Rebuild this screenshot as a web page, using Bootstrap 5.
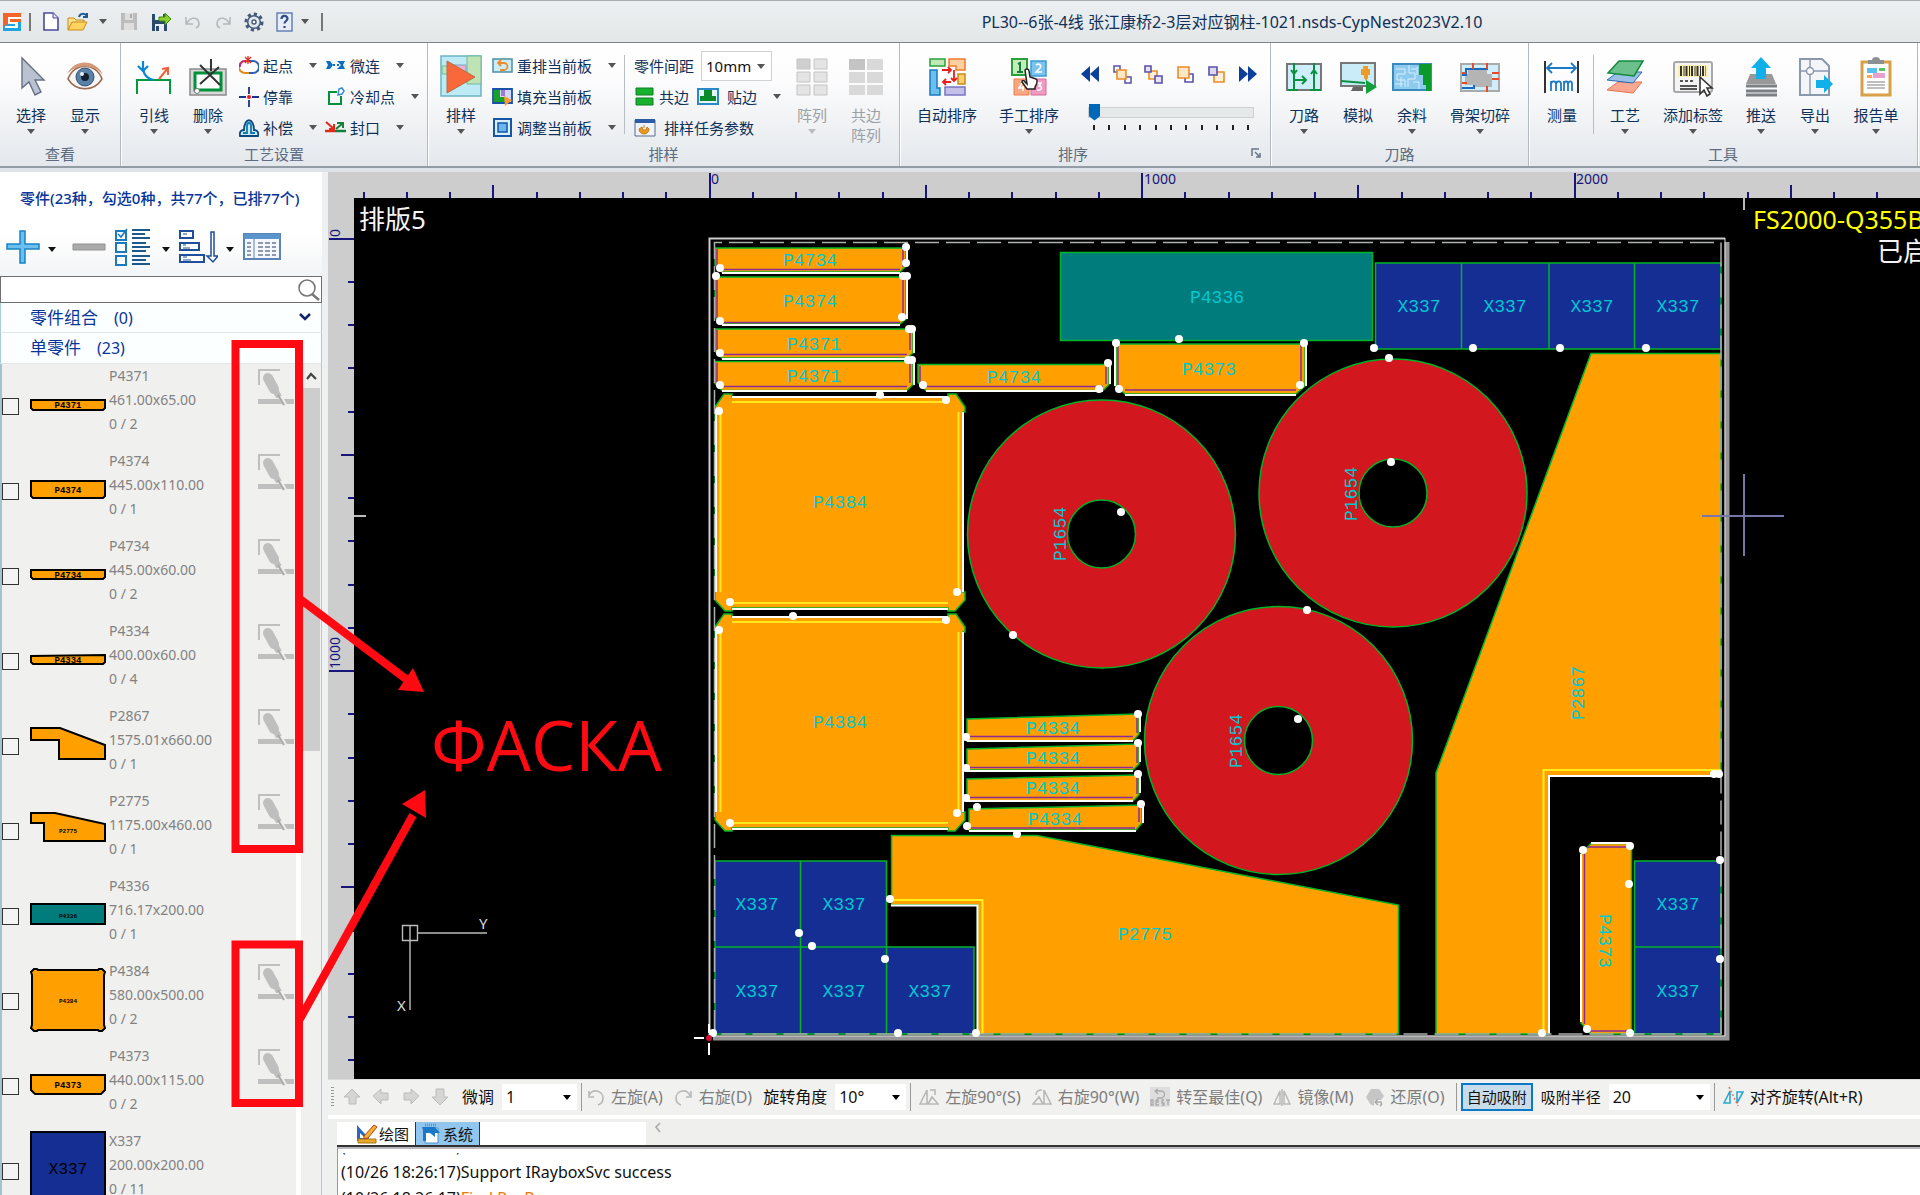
<!DOCTYPE html>
<html lang="zh-CN">
<head>
<meta charset="utf-8">
<meta name="viewport" content="width=device-width, initial-scale=1">
<title>PL30--6张-4线 张江康桥2-3层对应钢柱-1021.nsds-CypNest2023V2.10</title>
<link href="https://cdn.jsdelivr.net/npm/bootstrap@5.3.0/dist/css/bootstrap.min.css" rel="stylesheet">
<style>
  body { font-family: "Noto Sans", "Noto Sans CJK SC", sans-serif; font-size: 15px; line-height: 20px; color: #0f3058; background: #f0f0ee; }
  svg { display: block; flex: none; }
  button, select, input { font: inherit; color: inherit; }
  button { background: none; border: 0; padding: 0; white-space: nowrap; }
  .caret { width: 0; height: 0; border: 4px solid transparent; border-top: 5px solid #555; border-bottom: 0; flex: none; }
  .caret.pale { border-top-color: #bbb; }
  /* title bar */
  .titlebar { height: 43px; border-top: 1px solid #a9adb0; border-bottom: 1px solid #7d838c; background: linear-gradient(#eceff1, #e3e7e8); }
  .quick { position: absolute; left: 3px; top: 0; height: 100%; }
  .vline { width: 2px; height: 18px; background: #777; }
  .app-title { font-size: 16px; padding-left: 544px; }
  /* ribbon */
  .ribbon { height: 125px; border-bottom: 2px solid #929ca4; background: linear-gradient(#fff 0, #fcfcfd 30%, #e4e8ec 100%); white-space: nowrap; overflow: hidden; }
  .rgroup { border-right: 1px solid #b3b9c0; box-shadow: 1px 0 #fff; flex: none; position: relative; }
  .g-view { width: 121px; } .g-craft { width: 307px; } .g-nest { width: 472px; }
  .g-order { width: 371px; } .g-path { width: 258px; } .g-tools { width: 389px; }
  .rbody { height: 101px; padding-left: 6px; }
  .rlabel { color: #5b6b80; text-align: center; line-height: 20px; }
  .big { width: 54px; padding-top: 12px; display: flex; flex-direction: column; align-items: center; }
  .big.w3 { width: 68px; } .big.w4 { width: 82px; }
  .big svg { margin-bottom: 8px; }
  .big .caret { margin-top: 4px; }
  .off { color: #9aa0a6; }
  .rcol { padding-top: 7px; }
  .rcol.gaps { padding-left: 9px; width: 160px; }
  .rrow { height: 31px; }
  .rrow button { display: flex; align-items: center; gap: 4px; }
  .rsep { width: 1px; height: 79px; margin-top: 12px; background: #b8bec6; }
  .pick { position: relative; background: #fff; }
  .pick select { appearance: none; background: transparent; border: 0; outline: 0; width: 100%; height: 100%; padding: 0 4px; color: #111; }
  .pick .caret { position: absolute; right: 6px; top: 50%; margin-top: -2px; pointer-events: none; }
  .gap-pick { width: 71px; height: 30px; border: 1px solid #cfd2d6; margin-left: 7px; }
  .seqbox { padding: 21px 0 0 10px; }
  .seqnav { width: 178px; margin-bottom: 19px; }
  .seqslide { appearance: none; width: 166px; height: 18px; background: transparent; margin: 0; }
  .seqslide::-webkit-slider-runnable-track { height: 11px; background: #e6e9e9; border: 1px solid #cdd0d2; }
  .seqslide::-webkit-slider-thumb { appearance: none; width: 11px; height: 17px; margin-top: -4px; background: #0068b8; clip-path: polygon(0 0, 100% 0, 100% 75%, 50% 100%, 0 75%); }
  .dots { width: 156px; margin-left: 5px; }
  .dots i { width: 2px; height: 5px; background: #222; }
  .launch { position: absolute; right: 9px; bottom: 8px; }
  /* workspace */
  .work { border-top: 4px solid #dde3e8; min-height: 0; }
  .side { width: 328px; background: #f0f0ee; border-right: 6px solid #eff0f2; flex: none; color: #08349a; overflow: hidden; }
  .side-head { background: linear-gradient(#fff 60%, #f3f4f6); height: 104px; }
  .side-head h1 { font-size: 15px; line-height: 20px; margin: 0; padding: 16px 0 0 20px; }
  .side-tools { height: 50px; margin-top: 14px; padding-left: 6px; }
  .side-tools .caret { border-top-color: #111; }
  .find { height: 27px; border: 1px solid #6f6f6f; background: #fff; }
  .find input { border: 0; outline: 0; background: transparent; }
  .fold { height: 30px; font-size: 17px; padding: 0 10px 0 29px; background: #fcffff; border-bottom: 1px solid #e2e6e8; border-left: 1px solid #a9cbdc; border-right: 1px solid #a9cbdc; }
  .fold.open { height: 31px; }
  .fold span { font-size: 16px; }
  .plist { min-height: 0; overflow: hidden; border-left: 2px solid #a3c3d3; border-right: 1px solid #a9cbdc; }
  .part { height: 85px; color: #828282; font-size: 14px; line-height: 24px; }
  .part input { appearance: none; width: 17px; height: 17px; border: 1px solid #333; margin: 34px 11px 0 0; background: #f4f4f4; flex: none; }
  .part .thumb { width: 76px; height: 82px; margin-right: 3px; }
  .part .edge { margin: 4px 1px 0 0; }
  .sbar { width: 25px; border-left: 5px solid #fff; padding-left: 2px; padding-right: 1px; flex: none; }
  .sbar .thumbbar { height: 363px; background: #cdcdcd; }
  .ruler { background: #cdcdcd; overflow: hidden; }
  .ruler text { fill: #15157c; font-size: 14px; }
  .ruler path { stroke: #15157c; stroke-width: 2; }
  .topruler { height: 26px; } .leftruler { width: 26px; flex: none; }
  .board { background: #000; overflow: hidden; min-height: 0; }
  .cad { font-family: "Liberation Mono", monospace; font-size: 18px; fill: #00c8d2; text-anchor: middle; }
  /* move and rotate bar */
  .movebar { height: 36px; background: #f1f1ef; border-top: 1px solid #dcdcdc; white-space: nowrap; color: #111; padding: 0 0 2px 3px; font-size: 16px; }
  .movebar button { display: flex; align-items: center; gap: 6px; }
  .movebar .dim { color: #7d7d7d; margin-right: 11px; }
  .movebar .pick { height: 26px; }
  .movebar .pick .caret { border-top-color: #000; }
  .w-nudge { width: 75px; } .w-angle { width: 71px; } .w-radius { width: 101px; }
  .movebar .bar { width: 1px; height: 28px; background: #999; }
  .grip { width: 3px; height: 20px; background: repeating-linear-gradient(#999 0 1px, transparent 1px 3px); }
  .movebar .snap { border: 2px solid #0a7ac8; background: #c9dcea; height: 28px; padding: 0 4px; }
  .movebar .snap, .snaplabel { font-size: 15px; }
  .tabbar { height: 32px; border-top: 4px solid #fff; background: #efefed; padding-left: 9px; }
  .tabstrip { border-bottom: 2px solid #333; color: #111; padding-top: 3px; }
  .tabstrip .tabs { background: #fff; width: 309px; padding-left: 17px; }
  .tabstrip button { height: 23px; padding: 0 6px 0 2px; display: flex; align-items: center; gap: 2px; border-right: 1px solid #333; }
  .tabstrip .current { background: #91c6ee; padding: 0 6px; }
  .log { height: 48px; background: #fff; margin-left: 9px; border-top: 2px solid #b9b9bf; border-left: 1px solid #999; color: #111; overflow: hidden; padding-left: 3px; font-size: 16px; }
  .log p { margin: 0; line-height: 26px; }
  .log .clipline { margin-top: -16px; clip-path: inset(20px 0 0 0); }
  .warn { color: #f07800; }
  .notes { position: absolute; left: 0; top: 0; pointer-events: none; }
  .notes text { font-family: "Open Sans", sans-serif; font-size: 70px; fill: #ff0a12; }
</style>
<script src="https://cdn.jsdelivr.net/npm/bootstrap@5.3.0/dist/js/bootstrap.bundle.min.js"></script>
</head>
<body class="vh-100 d-flex flex-column overflow-hidden position-relative">

<header class="titlebar position-relative d-flex align-items-center justify-content-center flex-shrink-0">
  <div class="quick d-flex align-items-center">
    <svg width="18" height="20"><path fill="#f4642a" d="M0 1h18v9H0z"/><path fill="#1ea4e0" d="M0 10h18v9H0z"/><path fill="#f4642a" d="M0 10h8l-8 5z"/><path fill="#fff" d="M5 5h13v2H7v3h8v6H2v-2h10v-2H5z"/></svg>
    <span class="vline ms-2 me-2"></span>
    <button aria-label="新建" class="ms-1"><svg width="16" height="19"><path d="M1 1h9l5 5v12H1z" fill="#fff" stroke="#4a4a9c" stroke-width="1.6"/><path d="M10 1v5h5" fill="#dde" stroke="#4a4a9c"/></svg></button>
    <button aria-label="打开" class="ms-2"><svg width="24" height="20"><path d="M1 18V6h6l2 2h8v3" fill="#fbe08c" stroke="#c98a1a"/><path d="M1 18l4-8h15l-4 8z" fill="#ffd45e" stroke="#c98a1a"/><path d="M12 5c1-4 6-4 8-1m0-3v4h-4" fill="none" stroke="#1c5a94" stroke-width="2"/></svg></button>
    <span class="caret ms-2 me-2"></span>
    <button aria-label="保存" class="ms-1 me-2"><svg width="20" height="19"><path d="M2 1h16v17H2z" fill="#bcbcbc"/><path d="M6 1h8v7H6zM5 11h10v7H5z" fill="#dedede"/><path d="M11 2h2v4h-2z" fill="#aaa"/></svg></button>
    <button aria-label="另存" class="ms-1 me-2"><svg width="21" height="20"><path d="M1 2h15v17H1z" fill="#2b4a6b"/><path d="M4 2h8v6H4zM4 12h9v7H4z" fill="#e8eef4"/><path d="M5 14h3v5H5z" fill="#2b4a6b"/><path d="M8 5h6V1l6 6-6 6V9H8z" fill="#8cd02a" stroke="#3d8a12"/></svg></button>
    <button aria-label="撤销" class="ms-1 me-2"><svg width="18" height="18"><path d="M2 4v7h7M3 10c4-7 12-6 12 1 0 2-1 3-3 4" fill="none" stroke="#b5b9bc" stroke-width="1.6"/></svg></button>
    <button aria-label="重做" class="ms-1 me-2"><svg width="18" height="18"><path d="M16 4v7H9M15 10C11 3 3 4 3 11c0 2 1 3 3 4" fill="none" stroke="#b5b9bc" stroke-width="1.6"/></svg></button>
    <button aria-label="设置" class="ms-1 me-2"><svg width="20" height="20"><circle cx="10" cy="10" r="8" fill="none" stroke="#44587a" stroke-width="3" stroke-dasharray="3.2 3"/><circle cx="10" cy="10" r="6.3" fill="#dfe6ee" stroke="#44587a" stroke-width="1.5"/><circle cx="10" cy="10" r="2" fill="#fff" stroke="#44587a" stroke-width="1.4"/></svg></button>
    <button aria-label="帮助" class="ms-1"><svg width="17" height="20"><rect x="1" y="1" width="15" height="18" fill="#e7edf8" stroke="#5f7ab0" stroke-width="1.4"/><path d="M5.500 7c0-4 6-4 6-.5 0 2.500-3 2.500-3 5M8.500 14v2" fill="none" stroke="#2e4a86" stroke-width="2.200"/></svg></button>
    <span class="caret ms-2 me-2"></span>
    <span class="vline ms-1"></span>
  </div>
  <div class="app-title">PL30--6张-4线 张江康桥2-3层对应钢柱-1021.nsds-CypNest2023V2.10</div>
</header>

<nav class="ribbon d-flex flex-shrink-0">
  <section class="rgroup g-view">
    <div class="rbody d-flex ps-1">
      <button class="big"><svg width="30" height="42"><path d="M6 3v30l7-6 6 13 6-3-6-12h9z" fill="#b9c2d0" stroke="#667085" stroke-width="1.4"/></svg>选择<span class="caret"></span></button>
      <button class="big"><svg width="38" height="42"><path d="M2 24C8 7 30 7 36 24 28 37 10 37 2 24z" fill="#f6f6f6" stroke="#9a6a50" stroke-width="1.5"/><path d="M1 19C9 3 30 4 37 20 28 9 10 9 1 19z" fill="#d39a78"/><circle cx="19" cy="22" r="9" fill="#5a82a6" stroke="#31506e"/><circle cx="19" cy="22" r="4" fill="#14202c"/><circle cx="16" cy="19" r="2" fill="#e8f0f6"/></svg>显示<span class="caret"></span></button>
    </div>
    <div class="rlabel">查看</div>
  </section>

  <section class="rgroup g-craft">
    <div class="rbody d-flex">
      <button class="big"><svg width="38" height="42"><path d="M2 39V25h33v14" fill="none" stroke="#009a3c" stroke-width="2"/><path d="M8 6v8c1 6 4 10 11 11M3 11l5 5 5-5" fill="none" stroke="#0a86d4" stroke-width="2.200"/><path d="M24 24l9-11m-6 1l6-1v7" fill="none" stroke="#f4603a" stroke-width="2"/></svg>引线<span class="caret"></span></button>
      <button class="big"><svg width="38" height="42"><path d="M1 14h36v26H1z" fill="#d9d9d9" stroke="#8a8a8a" stroke-width="1.500"/><path d="M6 18h26v17H6z" fill="#fff" stroke="#00913a" stroke-width="3"/><path d="M11 10l20 20M30 12L11 29M22 4v12" stroke="#333" stroke-width="2"/><circle cx="8" cy="36" r="2.500" fill="#fff" stroke="#777"/></svg>删除<span class="caret"></span></button>
      <div class="rcol ps-1">
        <div class="rrow d-flex align-items-center"><button><svg width="20" height="20"><path d="M10 5H6a5 5 0 0 0 0 12h4" fill="none" stroke="#e08a1e" stroke-width="2"/><path d="M7 5H6a5 5 0 0 0-5 6" fill="none" stroke="#c02a78" stroke-width="2"/><path d="M10 17h4a5 5 0 0 0 0-12h-4" fill="none" stroke="#2c62b8" stroke-width="2"/><path d="M6 1l6 6M12 1L6 7M9 0v8" stroke="#e8281e" stroke-width="1.300"/></svg>起点</button><span class="caret ms-3"></span></div>
        <div class="rrow d-flex align-items-center"><button><svg width="20" height="20"><path d="M0 10h7M13 10h7M10 0v7M10 13v7" stroke="#1d2f86" stroke-width="1.800"/><circle cx="10" cy="10" r="2" fill="#f01818"/></svg>停靠</button></div>
        <div class="rrow d-flex align-items-center"><button><svg width="20" height="20"><path d="M1 18c-1-5 2-6 4-6 0-13 10-13 10 0 3 0 5 2 4 6z" fill="#cfe8f4" stroke="#0a4a7c" stroke-width="1.800"/><path d="M4 15h4V8c0-4 4-4 4 0v7h4" fill="none" stroke="#0c7ab4" stroke-width="1.800"/></svg>补偿</button><span class="caret ms-3"></span></div>
      </div>
      <div class="rcol ps-2">
        <div class="rrow d-flex align-items-center"><button><svg width="21" height="20"><path d="M1 5l4 0 3 4-3 4H1l2-4z" fill="#0a6ec4"/><path d="M8 9h6" stroke="#0a6ec4" stroke-width="2" stroke-dasharray="2 2"/><path d="M12 5h8l-2 4 2 4h-8l4-4z" fill="#0a6ec4"/></svg>微连</button><span class="caret ms-3"></span></div>
        <div class="rrow d-flex align-items-center"><button><svg width="21" height="20"><path d="M12 5H4v12h12V9" fill="none" stroke="#00913a" stroke-width="2"/><path d="M14 2l3-1 2 3-2 3-4 1z" fill="#fff" stroke="#3a8ad0" stroke-width="1.500"/></svg>冷却点</button><span class="caret ms-3"></span></div>
        <div class="rrow d-flex align-items-center"><button><svg width="21" height="20"><path d="M0 13h10" stroke="#e02a1a" stroke-width="2.500"/><path d="M10 13h11" stroke="#12803a" stroke-width="2.500"/><path d="M1 4l8 7m0-5v5H4" fill="none" stroke="#e02a1a" stroke-width="2"/><path d="M11 11l7-6m-6 0h6v5" fill="none" stroke="#12803a" stroke-width="2"/></svg>封口</button><span class="caret ms-3"></span></div>
      </div>
    </div>
    <div class="rlabel">工艺设置</div>
  </section>

  <section class="rgroup g-nest">
    <div class="rbody d-flex">
      <button class="big"><svg width="42" height="42"><path d="M1 1h40v40H1z" fill="#bdeaf4" stroke="#6ab4c4" stroke-width="1.500"/><path d="M27 1h14v28H27z" fill="#bfe3b4" stroke="#74b8a0"/><path d="M2 11h10v8H2z" fill="#bfe3b4" stroke="#74b8a0"/><path d="M12 10h14v14H12z" fill="#e8b4d8" stroke="#74a8b8"/><path d="M7 6l28 16L7 38z" fill="#f8683a" stroke="#b07048"/></svg>排样<span class="caret"></span></button>
      <div class="rcol ps-1">
        <div class="rrow d-flex align-items-center"><button><svg width="21" height="20"><path d="M1 3h19v13H1z" fill="#c9eef8" stroke="#4a8ea4" stroke-width="1.500"/><path d="M7 7h5a3 3 0 0 1 0 7H8M9 4L6 7l3 3" fill="none" stroke="#f08a28" stroke-width="1.800"/></svg>重排当前板</button><span class="caret ms-3"></span></div>
        <div class="rrow d-flex align-items-center"><button><svg width="21" height="20"><path d="M1 2h19v14H1z" fill="#d0d8f8" stroke="#1a50a8" stroke-width="1.800"/><path d="M2 3h6v12H2z" fill="#18a02c"/><path d="M8 10h5v5H8z" fill="#18a02c"/><path d="M9 3h4v6H9z" fill="#a07ad0"/><path d="M12 9l8 4-7 6z" fill="#f89a38"/></svg>填充当前板</button></div>
        <div class="rrow d-flex align-items-center"><button><svg width="21" height="20"><path d="M2 1h17v17H2z" fill="#d8f0fc" stroke="#1456a8" stroke-width="2"/><path d="M6 5h9v9H6z" fill="#6cb8ee" stroke="#1456a8" stroke-width="1.500"/></svg>调整当前板</button><span class="caret ms-3"></span></div>
      </div>
      <span class="rsep ms-2"></span>
      <div class="rcol gaps">
        <div class="rrow d-flex align-items-center"><label for="gap">零件间距</label><div class="pick gap-pick"><select id="gap"><option>10mm</option></select><span class="caret"></span></div></div>
        <div class="rrow d-flex align-items-center"><button><svg width="21" height="20"><path d="M2 1h17v7H2zM2 11h17v7H2z" fill="#18b02c" stroke="#0c8020"/></svg>共边</button><button class="ms-2"><svg width="22" height="20"><path d="M1 2h20v15H1z" fill="#e4f6fe" stroke="#2a8ac8" stroke-width="2"/><path d="M7 3h8v6h4v5H3V9h4z" fill="#0a8a2a"/></svg><span class="ps-1">贴边</span></button><span class="caret ms-3"></span></div>
        <div class="rrow d-flex align-items-center"><button><svg width="22" height="20"><path d="M1 2h20v16H1z" fill="#eef2fa" stroke="#5a6a8c"/><path d="M1 1h20v4H1z" fill="#2c5ca8"/><path d="M10 7v3m-5 1a5 5 0 1 0 10 0l-2-2-1 3H9L8 9z" fill="#e89a20" stroke="#c87a10"/></svg><span class="ps-1">排样任务参数</span></button></div>
      </div>
      <button class="big off" disabled><svg width="32" height="42"><g fill="#e4e4e4" stroke="#c4c4c4"><path fill="#cfcfcf" d="M1 4h13v10H1z"/><path d="M18 4h13v10H18zM1 17h13v10H1zM18 17h13v10H18zM1 30h13v10H1zM18 30h13v10H18z"/></g></svg>阵列<span class="caret pale"></span></button>
      <button class="big off" disabled><svg width="36" height="42"><path fill="#c4c4c4" d="M1 4h16v11H1z"/><path fill="#d9d9d9" d="M19 4h16v11H19zM1 17h16v11H1zM19 17h16v11H19zM1 30h16v10H1zM19 30h16v10H19z"/></svg><span>共边<br>阵列</span></button>
    </div>
    <div class="rlabel">排样</div>
  </section>

  <section class="rgroup g-order">
    <div class="rbody d-flex">
      <button class="big w4"><svg width="38" height="42"><path d="M2 4h15v7H2z" fill="#bfe8b4" stroke="#2aa03a" stroke-width="1.500"/><path d="M21 4h16v11H28V11H21z" fill="#fcd0a0" stroke="#ee7a2a" stroke-width="1.500"/><path d="M2 15h7v18h3v7H2z" fill="#6cc0ec" stroke="#1a7ac0" stroke-width="1.500"/><path d="M30 19h7v10h-7z" fill="#f8d070" stroke="#c88a1a" stroke-width="1.500"/><path d="M17 32h20v8H17z" fill="#c4c0ea" stroke="#7a74c0" stroke-width="1.500"/><path d="M14 15h9m-3-3l3 3-3 3M26 15v11m-3-3l3 3 3-3M23 27h-8m3-3l-3 3 3 3" fill="none" stroke="#e81e1e" stroke-width="1.800"/></svg>自动排序</button>
      <button class="big w4"><svg width="38" height="42"><path d="M2 4h15v16H2z" fill="#c4ecb8" stroke="#2aa03a" stroke-width="2"/><path d="M21 6h15v15H21z" fill="#7cc4ee" stroke="#3a9ad4" stroke-width="1.500"/><path d="M4 24h15v16H4z" fill="#f8a880" stroke="#ee7a4a"/><path d="M21 24h15v16H21z" fill="#f09ac0" stroke="#d86a9c"/><path d="M8 9l2-1v9m-3 0h6" fill="none" stroke="#12803a" stroke-width="2"/><path d="M26 10c3-2 6 0 4 3l-4 4h6M27 28h4l-2 3c4 0 3 5-2 4M12 28l-3 5h5m-1-2v5" fill="none" stroke="#fff" stroke-width="1.500"/><path d="M15 15c1-2 4-1 4 1l1 6 6 2c2 1 1 5-1 8v2h-8l-5-7c0-2 2-2 3 0l2 2z" fill="#fff" stroke="#222" stroke-width="1.500"/></svg>手工排序<span class="caret"></span></button>
      <div class="seqbox">
        <div class="seqnav d-flex justify-content-between">
          <button aria-label="最前"><svg width="20" height="20"><path d="M10 2v16L1 10zM19 2v16l-9-8z" fill="#0c3f9c"/></svg></button>
          <button aria-label="前移"><svg width="20" height="20"><path d="M2 2h6v6H2zM13 13h6v6h-6z" fill="#fff" stroke="#5a50a8" stroke-width="1.500"/><path d="M5 6h9v9H5z" fill="#ffe8c4" stroke="#ee8a28" stroke-width="1.600"/></svg></button>
          <button aria-label="后移"><svg width="20" height="20"><path d="M6 7h8v8H6z" fill="#fff0d8" stroke="#ee8a28" stroke-width="1.600"/><path d="M2 2h6v6H2zM12 12h7v7h-7z" fill="#e8e4f8" stroke="#5a50a8" stroke-width="1.600"/></svg></button>
          <button aria-label="置前"><svg width="20" height="20"><path d="M10 10h8v8h-8z" fill="#fff" stroke="#5a50a8" stroke-width="1.600"/><path d="M3 3h11v11H3z" fill="#ffe8c4" stroke="#ee8a28" stroke-width="1.600"/></svg></button>
          <button aria-label="置后"><svg width="20" height="20"><path d="M8 8h10v10H8z" fill="#fff0d8" stroke="#ee8a28" stroke-width="1.600"/><path d="M3 3h8v8H3z" fill="#dcd8f4" stroke="#5a50a8" stroke-width="1.600"/></svg></button>
          <button aria-label="最后"><svg width="20" height="20"><path d="M10 2v16l9-8zM1 2v16l9-8z" fill="#0c3f9c"/></svg></button>
        </div>
        <div class="ps-2"><input class="seqslide d-block" type="range" min="0" max="10" value="0" aria-label="排序进度">
        <div class="dots d-flex justify-content-between mt-1"><i></i><i></i><i></i><i></i><i></i><i></i><i></i><i></i><i></i><i></i><i></i></div></div>
      </div>
    </div>
    <div class="rlabel pe-4">排序</div>
    <button class="launch" aria-label="排序设置"><svg width="10" height="10"><path d="M1 8V1h7M4 4l5 5M9 5v4H5" fill="none" stroke="#6a7686" stroke-width="1.500"/></svg></button>
  </section>

  <section class="rgroup g-path">
    <div class="rbody d-flex">
      <button class="big"><svg width="38" height="42"><path d="M2 9h34v26H2z" fill="#cdeefa" stroke="#777" stroke-width="2"/><path d="M9 8v28M29 8v28M9 25h12m-4-4l4 4-4 4M6 15l3 4 3-4M26 19l3-4 3 4M3 35h10M25 35h11" fill="none" stroke="#0a9040" stroke-width="2"/></svg>刀路<span class="caret"></span></button>
      <button class="big"><svg width="40" height="42"><path d="M3 8h34v23H3z" fill="#c9ecf8" stroke="#777" stroke-width="2"/><path d="M3 26l24 2" stroke="#0a9040" stroke-width="2"/><path d="M25 11h5v12l-2 3-2-3zM23 14h9v6h-9z" fill="#f09a28"/><path d="M15 32h10v4H13z" fill="#666"/><path d="M28 25l11 7-11 7z" fill="#10a038"/></svg>模拟</button>
      <button class="big"><svg width="40" height="42"><path d="M1 9h38v26H1z" fill="#8ccaee" stroke="#3a8ac0" stroke-width="2"/><path d="M4 14h9v5H5v6h8v7M17 10v8h6v6h-7v8M25 12v8M9 22v10M3 29h8M21 27h6v7M19 14h5" fill="none" stroke="#d8f0fc" stroke-width="1"/><path d="M27 9h12v27h-5v-6h-3V20h-4z" fill="#0a9a2c"/></svg>余料<span class="caret"></span></button>
      <button class="big w4"><svg width="42" height="42"><path d="M2 9h38v27H2z" fill="#cdeefa" stroke="#aaa" stroke-width="2"/><path d="M9 15h19v4h5v13H14v-2H6V19h3z" fill="#b4b4b4"/><path d="M3 20h4v-6h21v-4M3 33h12v-3" fill="none" stroke="#1a6ac0" stroke-width="2"/><path d="M14 8v6M3 18h4M3 28h5M28 31v6M33 18h7M33 24h7M28 8v6" stroke="#e84a28" stroke-width="2"/></svg>骨架切碎<span class="caret"></span></button>
    </div>
    <div class="rlabel">刀路</div>
  </section>

  <section class="rgroup g-tools">
    <div class="rbody d-flex">
      <button class="big"><svg width="38" height="42"><path d="M2 6v32M35 6v32" stroke="#333" stroke-width="2"/><path d="M4 13h29M9 8l-5 5 5 5M28 8l5 5-5 5" fill="none" stroke="#1a7ac8" stroke-width="1.800"/><path d="M8 36V26m0 3c1-4 5-3 5 0v7m0-7c1-4 5-3 5 0v7M21 36V26m0 3c1-4 4-3 4 0v7m0-7c1-4 4-3 4 0v7" fill="none" stroke="#1a7ac8" stroke-width="1.800"/></svg>测量</button>
      <span class="rsep mx-1"></span>
      <button class="big"><svg width="40" height="42"><path d="M13 27h24l-9 11-26-3z" fill="#f8a890" stroke="#e87050"/><path d="M13 17h24l-9 11-26-3z" fill="#9ac0e8" stroke="#2a6ab8"/><path d="M14 6h24l-9 15-26-3z" fill="#6cc08c" stroke="#108a3c" stroke-width="1.500"/></svg>工艺<span class="caret"></span></button>
      <button class="big w4"><svg width="42" height="42"><rect x="2" y="7" width="38" height="30" rx="2" fill="#f4f4f4" stroke="#a8a8a8" stroke-width="2"/><path d="M6 10h30v12H6z" fill="#faf0b0"/><path d="M8 16h26" stroke="#333" stroke-width="10" stroke-dasharray="2 1.500 1 1"/><path d="M8 26h3m2 0h3m2 0h3M8 31h17M8 34h17" stroke="#555" stroke-width="1.800"/><path d="M28 22v17l4-4 3 6 3-2-3-6h5z" fill="#fff" stroke="#333" stroke-width="1.600"/></svg>添加标签<span class="caret"></span></button>
      <button class="big"><svg width="36" height="42"><path d="M7 19h22l4 10H3z" fill="#999"/><path d="M3 31h31M3 36h31M3 40h31" stroke="#7b8084" stroke-width="3"/><path d="M18 2l10 11h-5v11H13V13H8z" fill="#12b0ea"/></svg>推送<span class="caret"></span></button>
      <button class="big"><svg width="38" height="42"><path d="M4 4h22l7 7v29H4z" fill="#f3f5f8" stroke="#8a98ac" stroke-width="2"/><path d="M14 5v34M5 16h27" stroke="#8a98ac" stroke-width="1.400"/><circle cx="14" cy="16" r="3.500" fill="#fff" stroke="#8a98ac" stroke-width="1.500"/><path d="M20 25h8v-5l9 9-9 9v-5h-8z" fill="#12b0ea"/></svg>导出<span class="caret"></span></button>
      <button class="big w3"><svg width="34" height="42"><path d="M3 7h28v33H3z" fill="#fff" stroke="#d8a048" stroke-width="3"/><path d="M9 9V5h4c0-4 8-4 8 0h4v4z" fill="#8a9096"/><path d="M8 13h10v5H8z" fill="#5ac0ee"/><path d="M20 13h6v3h-6z" fill="#5ac060"/><path d="M14 18h12v5H14z" fill="#e8a0cc"/><path d="M8 20h5v3H8z" fill="#f8a850"/><path d="M8 27h18M8 30h18M8 33h18" stroke="#aaa" stroke-width="1.500"/></svg>报告单<span class="caret"></span></button>
    </div>
    <div class="rlabel">工具</div>
  </section>
</nav>

<main class="work d-flex flex-grow-1">
  <aside class="side d-flex flex-column">
    <div class="side-head flex-shrink-0">
      <h1>零件(23种，勾选0种，共77个，已排77个)</h1>
      <div class="side-tools d-flex align-items-center">
        <button aria-label="添加零件"><svg width="34" height="34"><path d="M14 1h5v13h14v5H19v14h-5V19H1v-5h13z" fill="#6cc0ee" stroke="#1a82c4" stroke-width="1.500"/></svg></button><span class="caret ms-2 me-2 mt-1"></span>
        <button aria-label="删除零件" class="ms-2"><svg width="34" height="34"><path d="M1 14h32v6H1z" fill="#ababab" stroke="#919191"/></svg></button>
        <button aria-label="勾选" class="ms-2"><svg width="40" height="38"><g fill="#fff" stroke="#1a7ac0" stroke-width="2"><path d="M2 3h10v9H2zM2 15h10v9H2zM2 28h10v9H2z"/></g><path d="M4 6l3 3 6-8" fill="none" stroke="#1a7ac0" stroke-width="1.600"/><path d="M18 2h18M18 6h13M18 10h18M18 15h14M18 19h18M18 23h14M18 28h18M18 32h14M18 36h18" stroke="#1c5a8c" stroke-width="1.800"/></svg></button><span class="caret ms-2 me-2 mt-1"></span>
        <button aria-label="排序"><svg width="40" height="36"><g fill="#fff" stroke="#1f4e9c" stroke-width="2"><path d="M2 2h13v7H2zM2 14h19v7H2zM2 26h24v7H2z"/><path d="M33 3h3v24h4l-5 6-6-6h4z" stroke-width="1.500"/></g><path d="M5 5h4M5 16h3m-3 3h7M5 28h4m-4 3h8" stroke="#1f4e9c"/></svg></button><span class="caret ms-2 me-2 mt-1"></span>
        <button aria-label="列表"><svg width="40" height="30"><path d="M2 2h36v25H2z" fill="#f4f8fc" stroke="#5a84b8" stroke-width="2"/><path d="M2 2h36v5H2z" fill="#5a94cc"/><path d="M12 7v20" stroke="#5a84b8"/><path d="M5 11h4M5 15h4M5 19h4M5 23h4M16 11h18M16 15h18M16 19h18M16 23h18" stroke="#6a7a94" stroke-width="1.600" stroke-dasharray="5 2"/></svg></button>
      </div>
    </div>
    <div class="find d-flex align-items-center flex-shrink-0"><input class="flex-grow-1" type="search" aria-label="查找零件"><svg width="24" height="24"><circle cx="10" cy="10" r="8" fill="none" stroke="#777" stroke-width="1.600"/><path d="M15 16l7 6" stroke="#777" stroke-width="2.500"/></svg></div>
    <button class="fold d-flex align-items-center flex-shrink-0">零件组合<span class="ms-3">(0)</span><svg class="ms-auto" width="12" height="9"><path d="M1 1l5 5 5-5" fill="none" stroke="#10246c" stroke-width="2.500"/></svg></button>
    <button class="fold open d-flex align-items-center flex-shrink-0">单零件<span class="ms-3">(23)</span></button>
    <div class="plist d-flex flex-grow-1">
      <div id="parts" class="flex-grow-1"></div>
      <div class="sbar"><div class="d-flex justify-content-center pt-2 mb-2"><svg width="11" height="8"><path d="M1 7l4-5 5 5" fill="none" stroke="#444" stroke-width="2.200"/></svg></div><div class="thumbbar"></div></div>
    </div>
  </aside>

  <section class="d-flex flex-column flex-grow-1 overflow-hidden">
    <div class="ruler topruler flex-shrink-0"><svg width="100%" height="26"><g transform="translate(-328 -172)"><path id="hticks"/><text x="711" y="184">0</text><text x="1144" y="184">1000</text><text x="1576" y="184">2000</text></g></svg></div>
    <div class="d-flex flex-grow-1 overflow-hidden">
      <div class="ruler leftruler"><svg width="26" height="100%"><g transform="translate(-328 -198)"><path id="vticks"/><text transform="translate(340 237) rotate(-90)">0</text><text transform="translate(340 669) rotate(-90)">1000</text></g></svg></div>
      <div class="board flex-grow-1">
        <svg width="100%" height="100%" role="img" aria-label="排版图">
          <g transform="translate(-354 -198)">
            <!-- sheet -->
            <path d="M709.500 1037V238.500H1725" fill="none" stroke="#ccc" stroke-width="2"/>
            <path d="M1727 242V1038H713" fill="none" stroke="#959595" stroke-width="5"/><path d="M1725 238V1036H710" fill="none" stroke="#ddd"/>
            <!-- plates -->
            <g fill="#ffa000" stroke="#00b428" stroke-width="1.500">
              <path d="M715 248h191v18l-6 6H722l-7-7zM715 277h191v42l-6 5H722l-7-7zM715 329h198v24l-6 5H722l-7-7zM715 361.500h198v23l-6 6H722l-7-7zM918 364.500h191v20l-6 6H926l-8-8zM1116 344h189v42l-9 8H1125l-9-8z"/>
              <path id="sq" d="M715 407l9-13h8v3h216v-3h8l9 13v5h-2v180h2v8l-10 11h-7v-3H732v3h-7l-10-11z"/>
              <use href="#sq" y="220"/>
              <path d="M967 719l172-5v20l-6 7H967zM967 749l172-5v20l-6 6H967zM967 779l172-4v20l-6 6H967zM969 809l173-4v18l-6 7H969z"/>
              <path d="M891.500 835.500H1037L1398.500 905v129H977.500V905h-86z"/>
              <path d="M1591 353.500h130V776h-172v258h-113V773z"/>
              <path d="M1591 843.500h40.500V1034H1591l-10-11V854z"/>
              <path fill="#007c7c" d="M1060.500 252.500h312v88h-312z"/>
              <path fill="#142e94" d="M1375.500 263H1721v86h-345.500zM1461.500 263v86M1549 263v86M1634.500 263v86M715 861h171.500v86H974v87H715zM800.500 861v173M886.500 947v87M715 947h171.500M1634.500 861H1721v173h-86.500zM1634.500 947H1721"/>
              <path fill="#d2181e" fill-rule="evenodd" d="M967.500 534a134 134 0 1 0 268 0 134 134 0 1 0-268 0zm100 0a34 34 0 1 1 68 0 34 34 0 1 1-68 0zM1259 493a134 134 0 1 0 268 0 134 134 0 1 0-268 0zm100 0a34 34 0 1 1 68 0 34 34 0 1 1-68 0zM1144.500 740.500a134 134 0 1 0 268 0 134 134 0 1 0-268 0zm100 0a34 34 0 1 1 68 0 34 34 0 1 1-68 0z"/>
            </g>
            <!-- bevel lines -->
            <path fill="none" stroke="#fff" stroke-width="2" d="M722 273h178M907 248v17M722 325h178M907 277v42M722 359h185M914 329v24M722 391h185M914 361v24M926 391h177M1110 364v20M1125 395h171M1306 344v42M1115 344v42M967 741h166M1140 714v18M967 771h166M1140 744v18M967 801h166M1140 775v18M969 831h167M1143 805v18M891 905.500h86.500V1034M1721 776h-172v258M1581 854v168M1591 843h40"/>
            <g id="sqline" fill="none" stroke-width="2"><path stroke="#fff" d="M732 397h216M963 412v180M948 609H732M716 592V412"/><path stroke="#ffe81e" d="M732 402h216M958.500 412v180M948 603H732M720.500 592V412"/></g>
            <use href="#sqline" y="220"/>
            <path fill="none" stroke="#ffee1e" stroke-width="2" d="M892 900h90.500v134M1721 770h-177.500v264"/>
            <path fill="none" stroke="#8c2a96" stroke-width="1.500" d="M717 249v18M722 269.500h178M903 249v18M717 278v40M722 322.500h178M903 278v40M717 330v20M722 354.500h185M910 330v20M717 363v20M722 386.500h185M910 363v20M920 366v18M926 386.500h177M1106 366v18M1118 345v42M1125 390h171M1301 345v42M969 736.500h164M1137 715v18M969 767.500h164M1137 745v18M969 797.500h164M1137 776v18M971 828h164M1139 806v16M1584.500 852v172M1587 847h43M1590 1031h40"/>
            <path d="M714.500 1034V242.500H1721V1034z" fill="none" stroke="#aab0aa" stroke-width="1.500" stroke-dasharray="24 7"/>
            <g class="cad">
              <text x="810" y="266">P4734</text><text x="810" y="307">P4374</text><text x="814" y="350">P4371</text><text x="814" y="382">P4371</text>
              <text x="1014" y="383">P4734</text><text x="1209" y="375">P4373</text><text x="1217" y="303">P4336</text>
              <text x="1419" y="312">X337</text><text x="1505" y="312">X337</text><text x="1592" y="312">X337</text><text x="1678" y="312">X337</text>
              <text x="840" y="508">P4384</text><text x="840" y="728">P4384</text>
              <text x="1053" y="734">P4334</text><text x="1053" y="764">P4334</text><text x="1053" y="794">P4334</text><text x="1055" y="825">P4334</text>
              <text x="1145" y="940">P2775</text>
              <text x="757" y="910">X337</text><text x="844" y="910">X337</text><text x="757" y="997">X337</text><text x="844" y="997">X337</text><text x="930" y="997">X337</text>
              <text x="1678" y="910">X337</text><text x="1678" y="997">X337</text>
              <text transform="translate(1066 534) rotate(-90)">P1654</text><text transform="translate(1357 494) rotate(-90)">P1654</text><text transform="translate(1242 741) rotate(-90)">P1654</text>
              <text transform="translate(1584 693) rotate(-90)">P2867</text><text transform="translate(1599 941) rotate(90)">P4373</text>
            </g>
            <g id="pins" fill="#fff"></g>
            <!-- origin, axes, cursor -->
            <circle cx="709" cy="1038" r="3" fill="#d2103a"/><path d="M694 1038h10M709 1024v9M709 1043v12" stroke="#fff" stroke-width="2"/>
            <path d="M402.500 925.500h15v15h-15zM410 926v84M417 933h70" fill="none" stroke="#bbb" stroke-width="1.400"/>
            <g fill="#ddd" font-size="15"><text x="479" y="929">Y</text><text x="397" y="1011">X</text></g>
            <path d="M1702 516h82M1744 474v82" stroke="#7676a8" stroke-width="2"/>
            <path d="M1744 198v12M354 516h12" stroke="#bbb" stroke-width="2"/>
            <g fill="#f4f4f4" font-size="26"><text x="359" y="229">排版5</text><text x="1877" y="261">已启用</text></g>
            <text x="1753" y="229" fill="#ffff00" font-size="25">FS2000-Q355B</text>
          </g>
        </svg>
      </div>
    </div>

    <div class="movebar d-flex align-items-center flex-shrink-0">
      <span class="grip me-2"></span>
      <button class="me-2" aria-label="上移"><svg width="21" height="20"><path d="M10 2l8 8h-4v7H7v-7H2z" fill="#d5d5d5" stroke="#bcbcbc"/></svg></button>
      <button class="me-2" aria-label="左移"><svg width="21" height="20"><path d="M2 9l8-7v4h7v7h-7v4z" fill="#d5d5d5" stroke="#bcbcbc"/></svg></button>
      <button class="me-2" aria-label="右移"><svg width="21" height="20"><path d="M19 9l-8-7v4H4v7h7v4z" fill="#d5d5d5" stroke="#bcbcbc"/></svg></button>
      <button aria-label="下移"><svg width="21" height="20"><path d="M11 18l8-8h-4V2H7v8H3z" fill="#d5d5d5" stroke="#bcbcbc"/></svg></button>
      <label for="nudge" class="ms-2 ps-1 me-2">微调</label><div class="pick w-nudge"><select id="nudge"><option>1</option></select><span class="caret"></span></div>
      <span class="bar mx-1"></span>
      <button class="dim"><svg width="19" height="20"><path d="M3 4v6h5M3 9c2-8 14-6 14 2 0 3-2 6-5 7" fill="none" stroke="#b8b8b8" stroke-width="1.600"/></svg>左旋(A)</button>
      <button class="dim"><svg width="19" height="20"><path d="M17 4v6h-5M16 9C14 1 2 3 2 11c0 3 2 6 5 7" fill="none" stroke="#b8b8b8" stroke-width="1.600"/></svg>右旋(D)</button>
      <label for="angle" class="me-1">旋转角度</label><div class="pick w-angle ms-1"><select id="angle"><option>10°</option></select><span class="caret"></span></div>
      <span class="bar me-2 ms-1"></span>
      <button class="dim"><svg width="20" height="20"><path d="M1 17L8 3v14zM9 17h10l-6-7zM11 3h5v5" fill="none" stroke="#b8b8b8" stroke-width="1.600"/></svg>左旋90°(S)</button>
      <button class="dim"><svg width="20" height="20"><path d="M19 17L12 3v14zM11 17H1l6-7zM4 8c0-4 3-5 6-5" fill="none" stroke="#b8b8b8" stroke-width="1.600"/></svg>右旋90°(W)</button>
      <button class="dim"><svg width="20" height="20"><path d="M0 0h20v20H0z" fill="#dedede"/><path d="M6 4h5a3 3 0 0 1 0 7H7M8 2L5 4l3 3M1 13v5h2v-5zM6 13v5h3m-3-3h3m-3-2h3M14 13h-2v3h2v2h-2M16 13h4m-2 0v5" fill="none" stroke="#aaa" stroke-width="1.300"/></svg>转至最佳(Q)</button>
      <button class="dim"><svg width="18" height="20"><path d="M1 17L7 4v13zM17 17L11 4v13zM9 2v17" fill="none" stroke="#b8b8b8" stroke-width="1.500"/></svg>镜像(M)</button>
      <button class="dim"><svg width="20" height="20"><path d="M6 2h8l5 7-3 4H9v6l-4-2-4-7z" fill="#c6c6c6"/><path d="M11 15h5a3 3 0 0 1-1 4M13 12l-3 3 3 3" fill="none" stroke="#aaa" stroke-width="1.500"/></svg>还原(O)</button>
      <span class="bar me-1"></span>
      <button class="snap">自动吸附</button>
      <label for="radius" class="snaplabel mx-2">吸附半径</label><div class="pick w-radius"><select id="radius"><option>20</option></select><span class="caret"></span></div>
      <span class="bar me-2 ms-1"></span>
      <button><svg width="21" height="20"><path d="M1 16L7 4v12zM20 5l-6 11V5z" fill="none" stroke="#28a8d8" stroke-width="1.600"/><path d="M6 0l9 19" stroke="#f07050" stroke-width="1.500" stroke-dasharray="2 2"/></svg>对齐旋转(Alt+R)</button>
    </div>
    <div class="tabbar flex-shrink-0">
      <div class="tabstrip d-flex">
        <div class="tabs d-flex">
          <button><svg width="21" height="20"><path d="M1 1v16h14z" fill="#2a66c0"/><path d="M4 9v5h5z" fill="#fff"/><path d="M2 15h18v4H2z" fill="#e8a82a" stroke="#a87418"/><path d="M8 12L18 1l3 2-9 11-4 1z" fill="#f0b030" stroke="#c03a1a"/></svg>绘图</button>
          <button class="current"><svg width="19" height="21"><path d="M3 5h13v15H3z" fill="#fff" stroke="#4a90c8"/><path d="M0 4h13l5 6h-5v4l-5-4H4v8H1V7z" fill="#1a78c8"/><path d="M3 2h11" stroke="#888" stroke-width="3" stroke-dasharray="1 1"/></svg>系统</button>
        </div>
        <svg class="ms-2" width="8" height="12"><path d="M6 1L2 5l4 5" fill="none" stroke="#aaa" stroke-width="1.600"/></svg>
      </div>
    </div>
    <div class="log flex-shrink-0">
      <p class="clipline">(10/26 18:26:17)</p>
      <p>(10/26 18:26:17)Support IRayboxSvc success</p>
      <p>(10/26 18:26:17)<span class="warn">Find RayBox</span></p>
    </div>
  </section>
</main>

<svg class="notes" width="700" height="1195">
  <g fill="none" stroke="#ff0a12" stroke-width="8"><path d="M235.500 344h63.500v505h-63.500zM235.500 944.500h63.500V1103h-63.500z"/><path d="M300 599l106 80M300 1019l113-204"/></g>
  <path d="M424 692l-26-2 15-22zM425 790l-23 14 24 14z" fill="#ff0a12"/>
  <text x="431" y="771">ФАСКА</text>
</svg>

<script>
  // Ruler ticks: 100 units per tick, long every 1000, medium every 500
  const step = 43.25;
  let h = '', v = '';
  for (let k = -8; k < 60; k++) {
    const len = k % 10 === 0 ? 25 : k % 5 === 0 ? 13 : 6;
    h += `M${Math.round(709.5 + k * step)} 198v-${len}`;
    if (k >= -1) v += `M354 ${Math.round(238.5 + k * step)}h-${len}`;
  }
  document.getElementById('hticks').setAttribute('d', h);
  document.getElementById('vticks').setAttribute('d', v);

  // Pierce points
  const pins = [[906,247],[906,263],[720,268],[716,276],[903,276],[907,276],[902,317],[720,321],[909,329],[912,329],[720,353],[908,360],[912,360],[720,385],[880,395],[946,400],[719,411],[1108,363],[1099,389],[923,385],[1116,343],[1119,389],[1179,339],[1304,343],[1300,385],[1121,512],[1374,348],[1473,348],[1560,348],[1646,348],[1389,358],[1391,462],[1307,610],[730,602],[957,592],[793,616],[946,620],[719,630],[1013,635],[957,813],[730,823],[1138,714],[966,737],[1138,743],[966,768],[1138,774],[966,798],[1141,804],[967,826],[977,807],[1017,834],[1298,719],[890,899],[799,933],[812,946],[885,959],[713,1033],[898,1033],[976,1033],[1583,850],[1630,846],[1629,884],[1587,1029],[1630,1033],[1542,1033],[1720,860],[1720,959],[1714,774],[1719,774]];
  document.getElementById('pins').innerHTML = pins.map(p => `<circle cx="${p[0]}" cy="${p[1]}" r="4"/>`).join('');

  // Part list: name, size, count, outline, fill, has bevel
  const parts = [
    ['P4371','461.00x65.00','0 / 2','M1 36h74v8l-2 2H3l-2-2z','#ffa000',1],
    ['P4374','445.00x110.00','0 / 1','M1 32h74v15l-2 2H3l-2-2z','#ffa000',1],
    ['P4734','445.00x60.00','0 / 2','M1 36h74v7l-2 2H3l-2-2z','#ffa000',1],
    ['P4334','400.00x60.00','0 / 4','M1 37l74-1v7l-2 2H3l-2-2z','#ffa000',1],
    ['P2867','1575.01x660.00','0 / 1','M1 24h29l45 17v14H29V36H1z','#ffa000',1],
    ['P2775','1175.00x460.00','0 / 1','M1 24h24l50 11v17H14V34H1z','#ffa000',1],
    ['P4336','716.17x200.00','0 / 1','M1 30h74v20H1z','#007c7c',0],
    ['P4384','580.00x500.00','0 / 2','M1 13l3-3h3l1 1h60l1-1h3l3 3-1 3v50l1 3-3 3h-3l-1-1H8l-1 1H4l-3-3 1-3V16z','#ffa000',1],
    ['P4373','440.00x115.00','0 / 2','M1 31h74v15l-4 4H5l-4-4z','#ffa000',1],
    ['X337','200.00x200.00','0 / 11','M1 3h74v76H1z','#142e94',0]
  ];
  const bevel = '<svg class="edge ms-auto" width="38" height="40"><path d="M2 17V2h21" fill="none" stroke="#bfbfbf" stroke-width="2"/><path d="M1 31h36v5H1z" fill="#bfbfbf"/><path d="M11 10l6 11" stroke="#bfbfbf" stroke-width="10" stroke-linecap="round"/><path d="M17 20l5 9" stroke="#bfbfbf" stroke-width="6"/><path d="M24 30l4 7" stroke="#efefed" stroke-width="4"/><path d="M21 27l6 10" stroke="#a8a8a8" stroke-width="2"/></svg>';
  document.getElementById('parts').innerHTML = parts.map((p, i) => {
    const big = p[0] === 'X337';
    const label = p[0] === 'P2867' ? '' : `<text x="38" y="${big ? 45 : 44}" text-anchor="middle" font-family="Liberation Mono" font-size="${big ? 16 : i > 4 && i < 8 ? 6 : 9}" font-weight="${big ? 400 : 700}">${p[0]}</text>`;
    return `<div class="part d-flex"><input type="checkbox" id="p${i}"><label class="d-flex" for="p${i}"><svg class="thumb" viewBox="0 0 76 82"><path d="${p[3]}" fill="${p[4]}" stroke="#000" stroke-width="2"/>${label}</svg><span>${p[0]}<br>${p[1]}<br>${p[2]}</span></label>${p[5] ? bevel : ''}</div>`;
  }).join('');
</script>
</body>
</html>
